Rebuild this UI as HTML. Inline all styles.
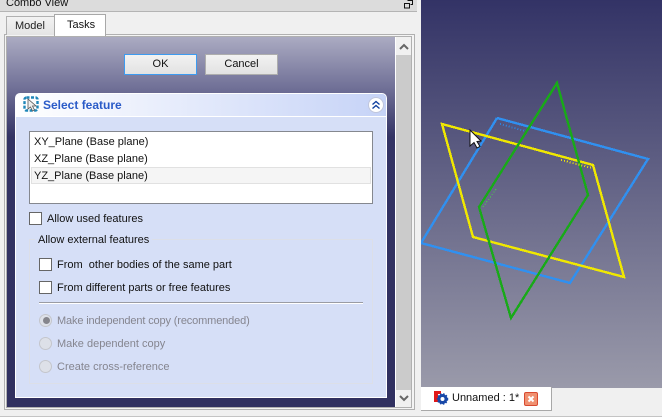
<!DOCTYPE html>
<html><head><meta charset="utf-8"><style>
html,body{margin:0;padding:0}
body{width:662px;height:417px;position:relative;overflow:hidden;background:#f0f0f0;font:11px "Liberation Sans",sans-serif;color:#111}
div,span.a{position:absolute;box-sizing:border-box}
.t{white-space:nowrap;line-height:15px;height:15px}
.cb{width:13px;height:13px;background:#fff;border:1px solid #666}
.r{width:13px;height:13px;border-radius:50%;background:#dde0e8;border:1px solid #c4c6cc}
.d{color:#85858f}
.btn{background:linear-gradient(#f2f2f2,#e2e2e2);text-align:center;line-height:19px}
</style></head><body>
<div style="left:0;top:0;width:417px;height:12px;background:#dcdcdc;border-bottom:1px solid #b4b4b4"></div>
<div class="t" style="left:6px;top:-4px">Combo View</div>
<svg style="position:absolute;left:404px;top:0" width="10" height="9"><path d="M3.500 .5h5v4h-2M.5 3.500h5v4.500h-5z" fill="none" stroke="#111"/></svg>

<div style="left:4px;top:34px;width:411px;height:376px;background:#f4f4f4;border:1px solid #b0b0b0"></div>
<div style="left:6px;top:16px;width:49px;height:19px;background:linear-gradient(#f2f2f2,#e4e4e4);border:1px solid #b0b0b0;border-bottom:0"></div>
<div class="t" style="left:15px;top:19px;color:#222">Model</div>
<div style="left:54px;top:14px;width:52px;height:22px;background:#fff;border:1px solid #a8a8a8;border-bottom:0"></div>
<div class="t" style="left:67px;top:18px">Tasks</div>

<div style="left:6px;top:36px;width:406px;height:372px;border:1px solid #b0b0b0;background:#fff"></div>
<div style="left:7px;top:37px;width:388px;height:370px;background:linear-gradient(#ababc2 0,#6f6f96 52px,#333364 100px,#303060 100%)"></div>
<div style="left:396px;top:37px;width:15px;height:370px;background:#cbcbcb"></div>
<div style="left:396px;top:37px;width:15px;height:18px;background:#f0f0f0"></div>
<div style="left:396px;top:390px;width:15px;height:17px;background:#f0f0f0"></div>
<svg style="position:absolute;left:398px;top:42px" width="12" height="10"><path d="M2 7l4-4 4 4" fill="none" stroke="#666" stroke-width="2"/></svg>
<svg style="position:absolute;left:398px;top:393px" width="12" height="10"><path d="M2 3l4 4 4-4" fill="none" stroke="#666" stroke-width="2"/></svg>

<div class="btn" style="left:124px;top:54px;width:73px;height:21px;border:1px solid #3d9bf0">OK</div>
<div class="btn" style="left:205px;top:54px;width:73px;height:21px;border:1px solid #adadad">Cancel</div>

<div style="left:15px;top:93px;width:372px;height:305px;background:#d6dff7;border:1px solid #fff;border-top-left-radius:5px;border-top-right-radius:5px"></div>
<div style="left:16px;top:94px;width:370px;height:23px;background:linear-gradient(90deg,#fff,#c6d3f7);border-top-left-radius:4px;border-top-right-radius:4px;border-bottom:1px solid #fff"></div>
<svg style="position:absolute;left:23px;top:96px" width="17" height="17"><rect x="1.500" y="1.500" width="13" height="13" rx="2" fill="none" stroke="#1e86b8" stroke-width="2.400" stroke-dasharray="3 1.500"/><path d="M5 3v10l2.500-2 2 4 2-1-2-4h3.500z" fill="#eee" stroke="#555" stroke-width=".8"/></svg>
<div class="t" style="left:43px;top:98px;font-weight:bold;color:#2a5bc8;font-size:12px">Select feature</div>
<div style="left:368px;top:97px;width:16px;height:16px;border-radius:50%;background:#fff;border:1px solid #c0c6dc"></div>
<svg style="position:absolute;left:371px;top:100px" width="10" height="10"><path d="M1.500 4.500l3.500-3 3.500 3M1.500 8.500l3.500-3 3.500 3" fill="none" stroke="#0f3f9f" stroke-width="1.400"/></svg>

<div style="left:29px;top:131px;width:344px;height:73px;background:#fff;border:1px solid #85888f"></div>
<div style="left:31px;top:167px;width:340px;height:17px;background:#f5f5f5;border:1px solid #e1e1e1"></div>
<div class="t" style="left:34px;top:135px">XY_Plane (Base plane)</div>
<div class="t" style="left:34px;top:152px">XZ_Plane (Base plane)</div>
<div class="t" style="left:34px;top:169px">YZ_Plane (Base plane)</div>

<div class="cb" style="left:29px;top:212px"></div>
<div class="t" style="left:47px;top:212px">Allow used features</div>

<div style="left:29px;top:239px;width:344px;height:145px;border:1px solid #dcdfe8"></div>
<div class="t" style="left:35px;top:233px;background:#d6dff7;padding:0 3px">Allow external features</div>
<div class="cb" style="left:39px;top:258px"></div>
<div class="t" style="left:57px;top:258px">From&nbsp; other bodies of the same part</div>
<div class="cb" style="left:39px;top:281px"></div>
<div class="t" style="left:57px;top:281px">From different parts or free features</div>
<div style="left:39px;top:302px;width:324px;height:2px;background:linear-gradient(#9a9ca4 50%,#fff 50%)"></div>
<div class="r" style="left:39px;top:314px"></div>
<div style="left:43px;top:317px;width:7px;height:7px;border-radius:50%;background:#85858c"></div>
<div class="t d" style="left:57px;top:314px;letter-spacing:-.14px">Make independent copy (recommended)</div>
<div class="r" style="left:39px;top:337px"></div>
<div class="t d" style="left:57px;top:337px">Make dependent copy</div>
<div class="r" style="left:39px;top:360px"></div>
<div class="t d" style="left:57px;top:360px">Create cross-reference</div>

<div style="left:421px;top:0;width:241px;height:388px;background:linear-gradient(#333366,#9a9aaa)"></div>
<svg style="position:absolute;left:421px;top:0" width="241" height="388" viewBox="421 0 241 388">
<g shape-rendering="crispEdges" fill="none" stroke-width="2.400">
<path d="M497 118L648 159L570 283L421 243M497 118L421 243" stroke="#3090f0"/>
<path d="M442 124L593 165L624 277L473 237Z" stroke="#f0e800"/>
<path d="M557 83L588 195L511 318L479 207Z" stroke="#18aa18"/>
<path d="M483 207L497 188" stroke="#40e040" stroke-width="1" stroke-dasharray="1 2"/>
<path d="M500 124L525 131" stroke="#3080d8" stroke-width="2" stroke-dasharray="1 2"/>
<path d="M561 160L592 168" stroke="#e8e010" stroke-width="2" stroke-dasharray="1 2"/>
</g>
<path d="M470 130V146L474 142.500L477 148L480 146.500L477 141.500L481 141Z" fill="#fff" stroke="#111"/>
</svg>

<div style="left:421px;top:387px;width:131px;height:24px;background:#fff;border-right:1px solid #a8a8a8;border-bottom:1px solid #a8a8a8"></div>
<svg style="position:absolute;left:433px;top:390px" width="16" height="15"><path d="M1 1h7v3H5v8H1z" fill="#e01818"/><circle cx="9.500" cy="9" r="3.500" fill="none" stroke="#1848a8" stroke-width="3"/><circle cx="9.500" cy="9" r="5" fill="none" stroke="#1848a8" stroke-width="1.500" stroke-dasharray="1.500 1.500"/></svg>
<div class="t" style="left:452px;top:391px">Unnamed : 1*</div>
<div style="left:524px;top:392px;width:14px;height:14px;background:#f09070;border:1px solid #d84a30;border-radius:2px"></div>
<svg style="position:absolute;left:524px;top:392px" width="14" height="14"><path d="M4.500 4.500l5 5M9.500 4.500l-5 5" stroke="#fff" stroke-width="2"/></svg>
<div style="left:0;top:416px;width:662px;height:1px;background:#c4c4c4"></div>
</body></html>
